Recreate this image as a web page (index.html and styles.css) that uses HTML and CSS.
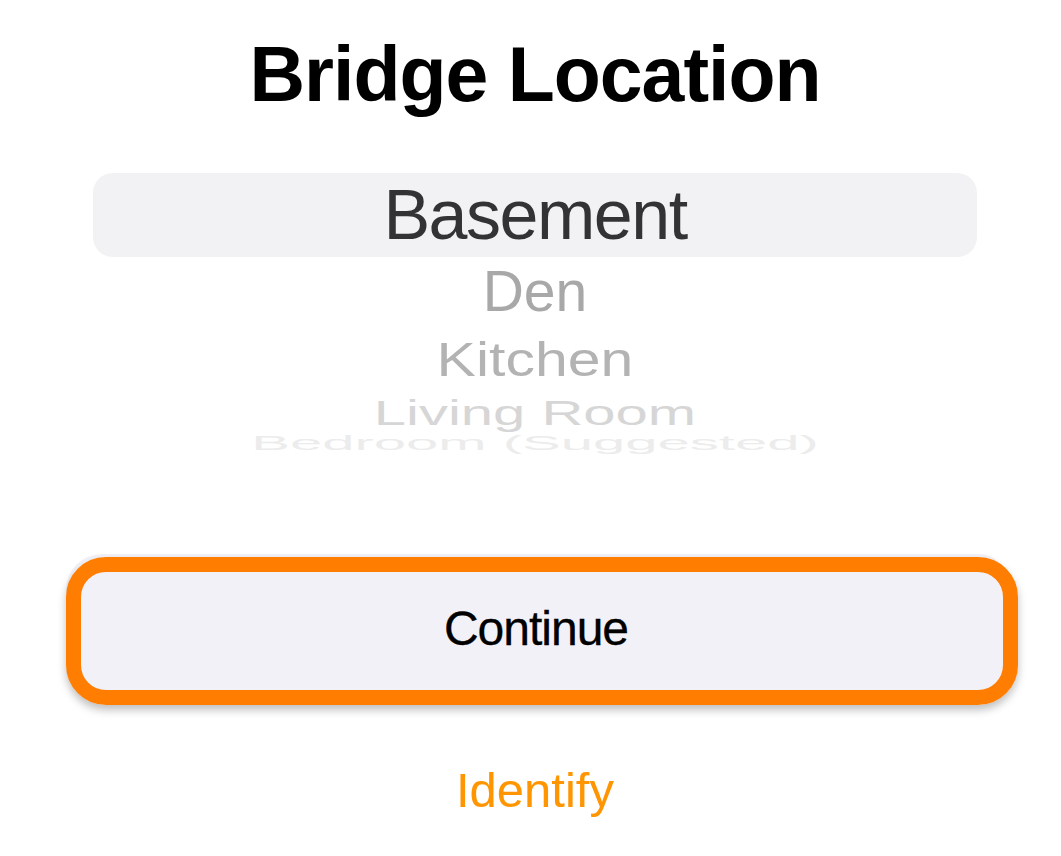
FILE: index.html
```html
<!DOCTYPE html>
<html lang="en">
<head>
    <meta charset="UTF-8">
    <meta name="viewport" content="width=device-width, initial-scale=1.0">
    <title>Bridge Location</title>
    <link rel="stylesheet" href="styles.css">
</head>
<body>

<div class="screen">
    <h1 class="title">Bridge Location</h1>

    <!-- Room picker wheel -->
    <div class="picker">
        <div class="picker-row selected">Basement</div>
        <div class="picker-row den">Den</div>
        <div class="picker-row kitchen">Kitchen</div>
        <div class="picker-row living">Living Room</div>
        <div class="picker-row bedroom">Bedroom (Suggested)</div>
    </div>

    <div class="continue-button">Continue</div>

    <div class="identify-link">Identify</div>
</div>

</body>
</html>
```

FILE: styles.css
```css
body {
    margin: 0;
    background-color: #fff;
    font-family: "Liberation Sans", Arial, sans-serif;
    color: #000;
}

.screen {
    margin-left: 9px;
    width: 1052px;
}

.title {
    margin: 36px 0 0;
    height: 77px;
    font-size: 77px;
    line-height: 77px;
    font-weight: 700;
    letter-spacing: -1px;
    text-align: center;
}

.picker {
    margin: 60px 84px 0 84px;
    display: flex;
    flex-direction: column;
}

.picker-row {
    text-align: center;
    white-space: nowrap;
}

.picker-row.selected {
    height: 84px;
    line-height: 84px;
    font-size: 70px;
    letter-spacing: -1.5px;
    color: #333336;
    background-color: #f2f2f5;
    border-radius: 20px;
}

.picker-row.den {
    height: 69px;
    line-height: 69px;
    font-size: 57px;
    color: #a8a8a8;
}

.picker-row.kitchen {
    height: 68px;
    line-height: 68px;
    font-size: 59px;
    color: #b3b3b3;
    transform: scaleY(0.8);
}

.picker-row.living {
    height: 37px;
    line-height: 37px;
    font-size: 58px;
    color: #d6d6d6;
    transform: scaleY(0.61);
}

.picker-row.bedroom {
    height: 24px;
    line-height: 24px;
    font-size: 58px;
    color: #ececec;
    transform: scaleY(0.34);
}

.continue-button {
    position: relative;
    margin: 99px 0 0 57px;
    width: 940px;
    height: 124px;
    padding-top: 14px;
    line-height: 122px;
    background-color: #f2f1f7;
    border-radius: 36px 26px 24px 26px;
    text-align: center;
    font-size: 48px;
    letter-spacing: -1px;
    -webkit-text-stroke: 0.3px #000;
}

/* focus ring drawn over the button */
.continue-button::after {
    content: "";
    position: absolute;
    left: 0;
    top: 3px;
    width: 952px;
    height: 148px;
    box-sizing: border-box;
    border: 15px solid #ff7d00;
    border-radius: 40px;
    box-shadow: 0 5px 8px rgba(0, 0, 0, 0.25);
}

.identify-link {
    margin-top: 68px;
    height: 60px;
    line-height: 60px;
    text-align: center;
    font-size: 49px;
    color: #ff9500;
}
```
